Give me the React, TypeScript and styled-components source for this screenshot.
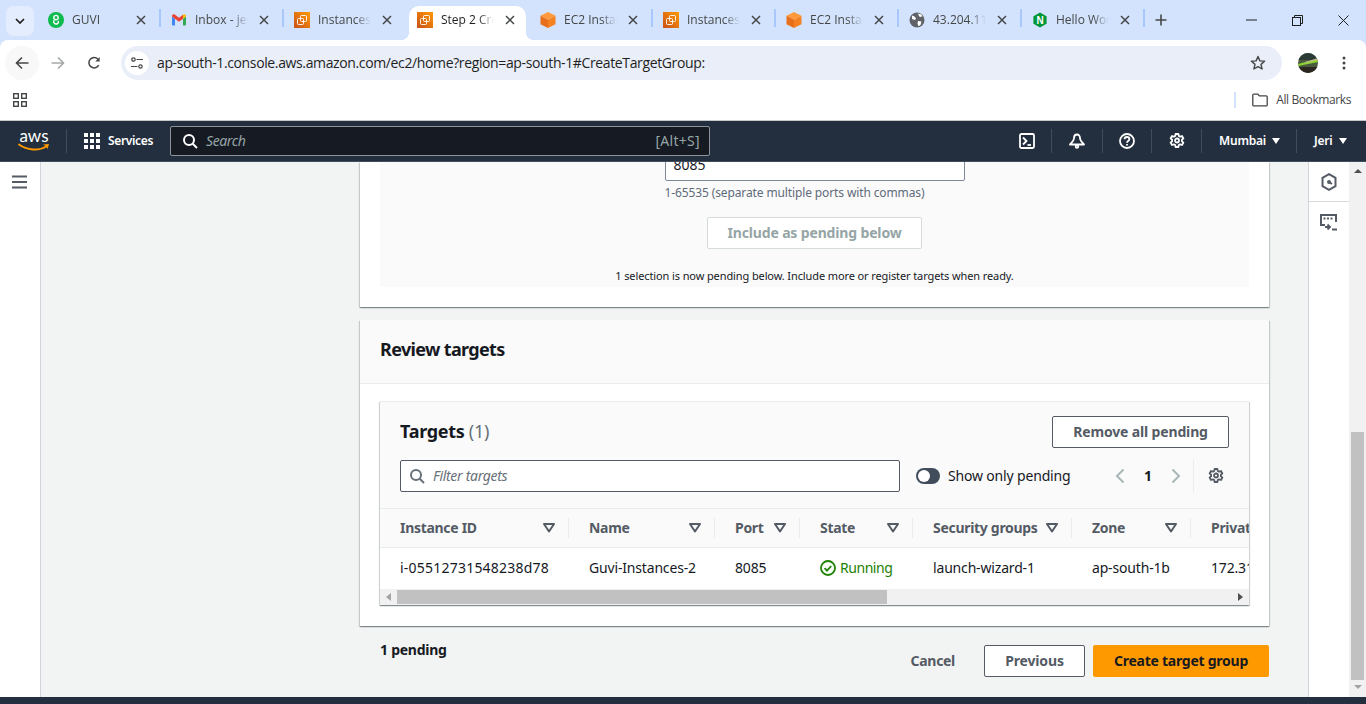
import React from "react";
import styled, { createGlobalStyle } from "styled-components";

const Global = createGlobalStyle`
  html, body { margin: 0; padding: 0; overflow: hidden; background: #fff; }
  * { box-sizing: border-box; }
`;
const chromeFont = `"Open Sans", "Noto Sans", sans-serif`;
const awsFont = `"Noto Sans", "Open Sans", sans-serif`;

const Page = styled.div`
  width: 1366px; height: 704px; display: flex; flex-direction: column; overflow: hidden;
  font-family: ${awsFont}; background: #d3e3fd;
`;
const TabStrip = styled.div`
  height: 40px; background: #d3e3fd; display: flex; align-items: flex-end; padding-left: 6px; flex: none;
`;
const TabList = styled.div`
  width: 28px; height: 30px; margin-bottom: 4px; margin-right: 3px; background: #e3edfd; border-radius: 8px;
  display: flex; align-items: center; justify-content: center; flex: none;
`;
const Tab = styled.div<{ $active?: boolean }>`
  width: 123px; height: 34px; flex: none; display: flex; align-items: center; padding: 0 11px; position: relative;
  padding-bottom: 6px;
  ${(p) => p.$active ? `
    background: #fff; width: 117px; margin: 0 3px; padding-left: 8px; padding-right: 8px; border-radius: 10px 10px 0 0; z-index: 1;
    &::before, &::after { content: ""; position: absolute; bottom: 0; width: 8px; height: 8px; background: radial-gradient(circle at 0 0, transparent 8px, #fff 8px); }
    &::before { left: -8px; }
    &::after { right: -8px; background: radial-gradient(circle at 100% 0, transparent 8px, #fff 8px); }
  ` : ""}
`;
const TabSep = styled.span`
  position: absolute; right: -1px; top: 3px; width: 2px; height: 18px; background: #a8c7fa;
`;
const TabIcon = styled.span`
  width: 16px; height: 16px; flex: none; display: block; margin-right: 8px;
  & > svg { display: block; }
`;
const TabTitle = styled.span<{ $active?: boolean }>`
  width: 53px; flex: none; overflow: hidden; white-space: nowrap; font: 12px/16px ${chromeFont}; color: ${(p) => p.$active ? "#1f1f1f" : "#444746"};
  -webkit-mask-image: linear-gradient(90deg, #000 70%, transparent 100%);
  mask-image: linear-gradient(90deg, #000 70%, transparent 100%);
`;
const TabClose = styled.span`
  margin-left: auto; width: 16px; height: 16px; display: flex; align-items: center; justify-content: center; flex: none;
`;
const NewTab = styled.div`
  width: 34px; height: 34px; display: flex; align-items: center; justify-content: center; flex: none; padding-bottom: 6px;
`;
const WinControls = styled.div`
  margin-left: auto; display: flex; height: 40px; align-items: center; flex: none;
`;
const WinBtn = styled.span`
  width: 46px; height: 40px; display: flex; align-items: center; justify-content: center;
`;
const Toolbar = styled.div`
  height: 40px; flex: none; display: flex; align-items: center; background: #fff; padding: 6px 0 0 5px; position: relative; border-radius: 8px 8px 0 0;
`;
const CircleBtn = styled.span<{ $hover?: boolean }>`
  width: 34px; height: 34px; border-radius: 50%; display: flex; align-items: center; justify-content: center; flex: none;
  margin-right: 2px; background: ${(p) => p.$hover ? "#f8f8f8" : "transparent"};
`;
const Omnibox = styled.div`
  margin-left: 8px; width: 1161px; height: 34px; border-radius: 17px; background: #e9eef8; display: flex; align-items: center; padding: 0 16px 0 4px; flex: none;
`;
const SiteChip = styled.span`
  width: 24px; height: 24px; border-radius: 50%; background: #fff; display: flex; align-items: center; justify-content: center; flex: none; margin-right: 8px;
`;
const Url = styled.span`
  font: 14px/20px ${chromeFont}; color: #1f1f1f; white-space: nowrap; flex: 1; letter-spacing: -0.37px;
`;
const Avatar = styled.span`
  width: 20px; height: 20px; margin-left: 16px; flex: none;
  & > svg { display: block; }
`;
const Kebab = styled.span`
  margin-left: 24px; display: flex; flex: none;
`;
const BookmarkBar = styled.div`
  height: 41px; flex: none; display: flex; align-items: center; background: #fff; padding: 0 15px 0 13px; border-bottom: 1px solid #c7c7c7;
`;
const BmSep = styled.span`
  margin-left: auto; width: 2px; height: 16px; background: #d3e3fd; flex: none;
`;
const BmFolder = styled.span`
  margin-left: 16px; margin-right: 8px; display: flex; flex: none;
`;
const BmLabel = styled.span`
  font: 12px/16px ${chromeFont}; color: #444746; white-space: nowrap; letter-spacing: -0.4px;
`;
const Nav = styled.div`
  height: 41px; flex: none; background: #232f3e; display: flex; align-items: center; padding-left: 18px; border-bottom: 1px solid #414d5c; color: #fff;
`;
const AwsLogo = styled.div`
  width: 32px; height: 26px; display: flex; flex-direction: column; align-items: center; flex: none;
`;
const AwsWord = styled.span`
  font: 400 17px/15px "Lato", sans-serif; color: #fff;
`;
const NavDivider = styled.span<{ $mx?: number }>`
  width: 1px; height: 24px; background: #414d5c; flex: none; margin: 0 ${(p) => p.$mx ?? 0}px;
`;
const Services = styled.span`
  display: flex; align-items: center; gap: 8px; font: 600 12px/16px ${awsFont}; color: #fff; flex: none; width: 87px; padding-left: 1px; letter-spacing: -0.35px;
`;
const SearchBox = styled.div`
  width: 540px; height: 30px; background: #161a22; border: 1px solid #8d9499; border-radius: 2px; display: flex; align-items: center; padding: 0 9px 0 11px; flex: none;
`;
const SearchHint = styled.span`
  margin-left: 8px; font: italic 14px/18px ${awsFont}; color: #95a5a6; letter-spacing: -0.4px;
`;
const SearchKey = styled.span`
  font: 14px/18px ${awsFont}; color: #95a5a6; margin-left: auto; letter-spacing: 0.3px;
`;
const NavRight = styled.div`
  margin-left: auto; display: flex; align-items: center; flex: none;
`;
const NavIcon = styled.span<{ $w: number }>`
  width: ${(p) => p.$w}px; display: flex; align-items: center; justify-content: center; flex: none;
`;
const NavMenu = styled.span<{ $w: number }>`
  width: ${(p) => p.$w}px; display: flex; align-items: center; gap: 6px; padding-left: 17px; font: 600 12px/16px ${awsFont}; color: #fff; flex: none; letter-spacing: -0.2px;
`;
const Caret = styled.span`
  width: 0; height: 0; border-left: 4px solid transparent; border-right: 4px solid transparent; border-top: 6px solid #fff;
`;
const Body = styled.div`
  flex: 1; display: flex; min-height: 0;
`;
const SideNav = styled.div`
  width: 41px; background: #fff; border-right: 1px solid #d1d5db; flex: none; padding: 13px 0 0 12px;
  & > svg { display: block; }
`;
const Main = styled.div`
  flex: 1; background: #f2f3f3; padding-left: 319px; overflow: hidden; min-width: 0;
`;
const Column = styled.div`
  width: 909px; display: flex; flex-direction: column;
`;
const Card = styled.div`
  background: #fff; box-shadow: 0 1px 1px 0 rgba(0,28,36,.3), 1px 1px 1px 0 rgba(0,28,36,.15), -1px 1px 1px 0 rgba(0,28,36,.15);
`;
const TopCard = styled(Card)`
  height: 145px; padding: 0 20px;
`;
const Panel = styled.div`
  height: 125px; background: #fafafa; overflow: hidden; display: flex; flex-direction: column; align-items: center;
`;
const PortField = styled.div`
  width: 300px; height: 32px; margin-top: -13px; border: 1px solid #7d8998; border-radius: 2px; background: #fff; padding: 0 8px; flex: none;
  font: 14px/30px ${awsFont}; color: #16191f;
`;
const Hint = styled.div`
  width: 300px; margin-top: 4px; font: 12px/16px ${awsFont}; color: #5f6b7a; white-space: nowrap; flex: none; letter-spacing: -0.12px;
`;
const OutlineBtn = styled.span<{ $w: number; $disabled?: boolean }>`
  width: ${(p) => p.$w}px; height: 32px; display: flex; align-items: center; justify-content: center; flex: none; background: #fff; border-radius: 2px;
  border: 1px solid ${(p) => p.$disabled ? "#d5dbdb" : "#545b64"}; color: ${(p) => p.$disabled ? "#95a5a6" : "#545b64"};
  font: 700 14px/18px ${awsFont}; letter-spacing: -0.15px; white-space: nowrap;
`;
const PendingBtn = styled(OutlineBtn)`
  margin-top: 16px;
`;
const Notice = styled.div`
  margin-top: 19px; font: 11px/16px ${awsFont}; color: #16191f; white-space: nowrap; letter-spacing: -0.11px;
`;
const ReviewCard = styled(Card)`
  margin-top: 13px; height: 306px;
`;
const CardHead = styled.div`
  height: 64px; padding: 0 20px 5px; background: #fafafa; border-bottom: 1px solid #eaeded; display: flex; align-items: center;
  font: 700 18px/22px ${awsFont}; color: #16191f; letter-spacing: -0.65px;
`;
const CardBody = styled.div`
  padding: 17px 20px 21px;
`;
const TargetBox = styled.div`
  height: 204px; box-shadow: 0 1px 1px 0 rgba(0,28,36,.3), 1px 1px 1px 0 rgba(0,28,36,.15), -1px 1px 1px 0 rgba(0,28,36,.15); border-top: 1px solid #eaeded;
  display: flex; flex-direction: column; overflow: hidden; background: #fff;
`;
const BoxHead = styled.div`
  height: 106px; background: #fafafa; padding: 14px 20px 0; flex: none;
`;
const TitleRow = styled.div`
  height: 32px; display: flex; align-items: center; justify-content: space-between;
`;
const BoxTitle = styled.div`
  font: 700 18px/22px ${awsFont}; color: #16191f; letter-spacing: -0.3px; margin-bottom: 2px;
`;
const Count = styled.span`
  font-weight: 400; color: #687078;
`;
const FilterRow = styled.div`
  margin-top: 12px; height: 32px; display: flex; align-items: center;
`;
const FilterInput = styled.div`
  width: 500px; height: 32px; border: 1px solid #545b64; border-radius: 2px; background: #fff; display: flex; align-items: center; padding-left: 8px; flex: none;
`;
const FilterHint = styled.span`
  margin-left: 8px; font: italic 14px/18px ${awsFont}; color: #687078; letter-spacing: -0.3px;
`;
const Toggle = styled.span`
  margin-left: 16px; width: 24px; height: 16px; border-radius: 8px; background: #414d5c; padding: 2px; flex: none; display: flex;
`;
const Knob = styled.span`
  width: 12px; height: 12px; border-radius: 50%; background: #fff;
`;
const ToggleLabel = styled.span`
  margin-left: 8px; font: 14px/18px ${awsFont}; color: #16191f; width: 167px; white-space: nowrap; flex: none; letter-spacing: -0.17px;
`;
const Pager = styled.div`
  display: flex; align-items: center; flex: none; height: 32px;
`;
const PageNum = styled.span`
  width: 46px; text-align: center; font: 700 14px/18px ${awsFont}; color: #16191f;
`;
const PagerDivider = styled.span`
  width: 1px; height: 32px; background: #eaeded; margin: 0 14px 0 12px; flex: none;
`;
const GridRow = styled.div<{ $head?: boolean }>`
  display: grid; grid-template-columns: 189px 146px 85px 113px 159px 119px 120px; width: 931px; flex: none;
  height: ${(p) => p.$head ? 40 : 41}px; align-items: center; background: ${(p) => p.$head ? "#fafafa" : "#fff"};
  ${(p) => p.$head ? "border-top: 1px solid #eaeded; border-bottom: 1px solid #eaeded;" : ""}
`;
const Table = styled.div`
  overflow: hidden; flex: none;
`;
const HeadCell = styled.div<{ $last?: boolean }>`
  height: 20px; display: flex; align-items: center; justify-content: space-between; padding: 0 ${(p) => p.$last ? 0 : 13}px 0 20px;
  ${(p) => p.$last ? "" : "border-right: 1px solid #eaeded;"}
  font: 700 14px/18px ${awsFont}; color: #545b64; white-space: nowrap; letter-spacing: -0.3px;
`;
const Cell = styled.div<{ $mono?: boolean }>`
  padding: 0 0 2px 20px; font: 14px/18px ${awsFont}; color: #16191f; white-space: nowrap; display: flex; align-items: center;
  letter-spacing: ${(p) => p.$mono ? "0.22px" : "-0.17px"};
`;
const Running = styled.span`
  color: #1d8102; margin-left: 4px; letter-spacing: -0.45px;
`;
const ScrollTrack = styled.div`
  height: 16px; background: #f1f1f1; display: flex; align-items: center; flex: none; width: 100%;
`;
const ScrollThumb = styled.span`
  width: 490px; height: 14px; background: #c1c1c1; flex: none;
`;
const ArrowBox = styled.span<{ $end?: boolean }>`
  width: 17px; height: 14px; display: flex; align-items: center; justify-content: center; flex: none;
  ${(p) => p.$end ? "margin-left: auto;" : ""}
`;
const ActionBar = styled.div`
  margin-top: 19px; height: 32px; display: flex; align-items: center; padding-left: 20px;
`;
const PendingNote = styled.span`
  font: 700 14px/18px ${awsFont}; color: #16191f; align-self: flex-start; margin-top: -4px; letter-spacing: -0.25px;
`;
const CancelLink = styled.span`
  margin-left: auto; font: 700 14px/18px ${awsFont}; color: #545b64; letter-spacing: -0.3px;
`;
const PrevBtn = styled(OutlineBtn)`
  margin-left: 29px;
`;
const PrimaryBtn = styled.span`
  margin-left: 8px; width: 176px; height: 32px; background: #ff9900; border-radius: 2px; display: flex; align-items: center; justify-content: center;
  font: 700 14px/18px ${awsFont}; color: #16191f; letter-spacing: -0.25px;
`;
const Rail = styled.div`
  width: 41px; flex: none; background: #fff; border-left: 1px solid #d1d5db; display: flex; flex-direction: column;
`;
const RailItem = styled.div<{ $line?: boolean }>`
  height: 40px; display: flex; align-items: center; justify-content: center;
  ${(p) => p.$line ? "border-bottom: 1px solid #d5dbdb;" : ""}
`;
const PageScroll = styled.div`
  width: 17px; flex: none; background: #f1f1f1; display: flex; flex-direction: column; align-items: center; padding-bottom: 3px;
`;
const ScrollArrow = styled.span<{ $down?: boolean }>`
  width: 0; height: 0; border-left: 4px solid transparent; border-right: 4px solid transparent; flex: none;
  ${(p) => p.$down ? "border-top: 4px solid #a3a3a3; margin-top: auto; margin-bottom: 5px;" : "border-bottom: 4px solid #505050; margin-top: 7px;"}
`;
const PageThumb = styled.span`
  width: 13px; height: 248px; background: #c1c1c1; margin-top: 259px; flex: none;
`;
const Footer = styled.div`
  height: 7px; background: #232f3e; flex: none;
`;

/* ---------- icons ---------- */
const Chevron = () => (
  <svg width="10" height="6" viewBox="0 0 10 6"><path d="M1 1l4 4 4-4" fill="none" stroke="#1f1f1f" strokeWidth="1.7" /></svg>
);
const X = () => (
  <svg width="10" height="10" viewBox="0 0 10 10"><path d="M1 1l8 8M9 1l-8 8" stroke="#444746" strokeWidth="1.5" /></svg>
);
const Ec2 = () => (
  <svg width="16" height="16" viewBox="0 0 16 16">
    <defs><linearGradient id="ec" x1="0" y1="1" x2="1" y2="0"><stop offset="0" stopColor="#c8511b" /><stop offset="1" stopColor="#f90" /></linearGradient></defs>
    <rect width="16" height="16" fill="url(#ec)" />
    <rect x="6.5" y="3.5" width="6" height="6" rx="1" fill="none" stroke="#fff" strokeWidth=".9" />
    <rect x="3.5" y="6.5" width="6" height="6" rx="1" fill="none" stroke="#fff" strokeWidth=".9" />
  </svg>
);
const Cube = () => (
  <svg width="16" height="16" viewBox="0 0 16 16">
    <path d="M8 0l7.5 3.8L8 7.8.5 3.8z" fill="#ff9a3c" />
    <path d="M.5 3.8L8 7.8V16L.5 12.2z" fill="#e8701a" />
    <path d="M15.5 3.8L8 7.8V16l7.5-3.8z" fill="#f58220" />
  </svg>
);
const Guvi = () => (
  <svg width="16" height="16" viewBox="0 0 16 16">
    <circle cx="8" cy="8" r="8" fill="#0dbb4f" />
    <circle cx="8" cy="5.6" r="2.2" fill="none" stroke="#fff" strokeWidth="1.4" />
    <path d="M6.2 8.2C5.2 9.4 5.6 12 8 12s2.8-2 2-3.2" fill="none" stroke="#fff" strokeWidth="1.4" />
  </svg>
);
const Gmail = () => (
  <svg width="16" height="16" viewBox="0 0 16 16">
    <path d="M1 13.5V4.6L4 6.8v6.7H2a1 1 0 0 1-1-1z" fill="#4285f4" />
    <path d="M15 13.5V4.6L12 6.8v6.7h2a1 1 0 0 0 1-1z" fill="#34a853" />
    <path d="M1 3.8C1 2.4 2.6 1.7 3.7 2.6L8 5.8l4-3v4L8 9.8 4 6.8 1 4.6z" fill="#ea4335" />
    <path d="M12 2.8l.4-.3C13.5 1.7 15 2.4 15 3.8v.8l-3 2.2z" fill="#fbbc04" />
  </svg>
);
const Globe = () => (
  <svg width="16" height="16" viewBox="0 0 16 16">
    <circle cx="8" cy="8" r="7.5" fill="#5f6368" />
    <path d="M3 3.5l2.5 1 1.5 2-1 1.5-3-1zM9 1.5l3 .8 1.5 2-2.5.7-1-1zM9 9l3.5.5-1 3.5-2 1.3-1-2.5z" fill="#fff" />
  </svg>
);
const Nginx = () => (
  <svg width="16" height="16" viewBox="0 0 16 16">
    <path d="M8 .5l6.6 3.75v7.5L8 15.5l-6.6-3.75v-7.5z" fill="#009639" />
    <text x="8" y="11.6" textAnchor="middle" fontFamily="Liberation Sans, sans-serif" fontWeight="700" fontSize="10" fill="#fff">N</text>
  </svg>
);
const Plus = () => (
  <svg width="12" height="12" viewBox="0 0 12 12"><path d="M6 .5v11M.5 6h11" stroke="#444746" strokeWidth="1.6" /></svg>
);
const Back = ({ color }: { color: string }) => (
  <svg width="14" height="14" viewBox="0 0 14 14"><path d="M13.5 7H1.8M7 1.5L1.5 7 7 12.5" fill="none" stroke={color} strokeWidth="1.6" /></svg>
);
const Forward = () => (
  <svg width="14" height="14" viewBox="0 0 14 14"><path d="M.5 7h11.7M7 1.5L12.5 7 7 12.5" fill="none" stroke="#a6a8aa" strokeWidth="1.6" /></svg>
);
const Reload = () => (
  <svg width="14" height="14" viewBox="0 0 14 14">
    <path d="M11.7 9.2A5.2 5.2 0 1 1 11 3.2" fill="none" stroke="#444746" strokeWidth="1.5" />
    <path d="M12.7 1v4.4H8.3z" fill="#444746" />
  </svg>
);
const Tune = () => (
  <svg width="14" height="14" viewBox="0 0 14 14" fill="none" stroke="#444746" strokeWidth="1.2">
    <circle cx="3.5" cy="3.5" r="1.7" /><path d="M6.5 3.5H13M1 10.5h6.5" /><circle cx="10.5" cy="10.5" r="1.7" />
  </svg>
);
const Star = () => (
  <svg width="16" height="16" viewBox="0 0 16 16"><path d="M8 1.5l1.9 4.4 4.7.4-3.6 3.1 1.1 4.6L8 11.6 3.9 14l1.1-4.6L1.4 6.3l4.7-.4z" fill="none" stroke="#444746" strokeWidth="1.4" strokeLinejoin="round" /></svg>
);
const AvatarImg = () => (
  <svg width="20" height="20" viewBox="0 0 20 20">
    <defs><clipPath id="av"><circle cx="10" cy="10" r="10" /></clipPath></defs>
    <g clipPath="url(#av)">
      <rect width="20" height="20" fill="#4a5a3c" />
      <rect y="0" width="20" height="7" fill="#2a3a34" />
      <path d="M0 11L20 6v3L0 13z" fill="#8fd435" />
      <path d="M7 9l13-4v1.4L7 10z" fill="#c8b890" />
      <rect y="14" width="20" height="6" fill="#2b2620" />
    </g>
  </svg>
);
const Dots = () => (
  <svg width="4" height="14" viewBox="0 0 4 14" fill="#444746"><circle cx="2" cy="2" r="1.5" /><circle cx="2" cy="7" r="1.5" /><circle cx="2" cy="12" r="1.5" /></svg>
);
const Apps = () => (
  <svg width="14" height="14" viewBox="0 0 14 14" fill="none" stroke="#444746" strokeWidth="1.4">
    <rect x=".7" y=".7" width="4.6" height="4.6" /><rect x="8.7" y=".7" width="4.6" height="4.6" />
    <rect x=".7" y="8.7" width="4.6" height="4.6" /><rect x="8.7" y="8.7" width="4.6" height="4.6" />
  </svg>
);
const Folder = () => (
  <svg width="16" height="14" viewBox="0 0 16 14"><path d="M.8 2.2c0-.6.4-1 1-1h4l1.6 1.7h6.8c.6 0 1 .4 1 1v8c0 .6-.4 1-1 1H1.8c-.6 0-1-.4-1-1z" fill="none" stroke="#444746" strokeWidth="1.3" /></svg>
);
const Smile = () => (
  <svg width="32" height="9" viewBox="0 0 32 9">
    <path d="M1 1.5C9 7.5 21 8 28 3.5" fill="none" stroke="#ff9900" strokeWidth="1.9" strokeLinecap="round" />
    <path d="M25 1.6L31 1l-1.6 5.2c-.3-1.6-1.6-3.4-4.4-4.6z" fill="#ff9900" />
  </svg>
);
const GridIcon = () => (
  <svg width="16" height="16" viewBox="0 0 16 16" fill="#fff">
    {[0, 6, 12].flatMap((y) => [0, 6, 12].map((x) => <rect key={`${x}-${y}`} x={x} y={y} width="4" height="4" />))}
  </svg>
);
const Search = ({ color, size = 16 }: { color: string; size?: number }) => (
  <svg width={size} height={size} viewBox="0 0 16 16" fill="none" stroke={color} strokeWidth="2">
    <circle cx="7" cy="7" r="5" /><path d="M10.5 10.5L15 15" />
  </svg>
);
const Terminal = () => (
  <svg width="16" height="16" viewBox="0 0 16 16" fill="none" stroke="#fff" strokeWidth="1.8">
    <rect x="1" y="1" width="14" height="14" rx="1.5" /><path d="M4 4.5L7.5 8 4 11.5" /><path d="M8.5 12h3.5" />
  </svg>
);
const Bell = () => (
  <svg width="16" height="16" viewBox="0 0 16 16" fill="none" stroke="#fff" strokeWidth="1.8" strokeLinejoin="round">
    <path d="M8 1.5C6.2 1.5 5 3 5 5c0 2.4-1.5 4-4 6.5h14C12.5 9 11 7.4 11 5c0-2-1.2-3.5-3-3.5z" /><circle cx="8" cy="13.5" r="1.3" />
  </svg>
);
const Help = () => (
  <svg width="16" height="16" viewBox="0 0 16 16" fill="none" stroke="#fff" strokeWidth="1.8">
    <circle cx="8" cy="8" r="7" /><path d="M5.6 6.2C5.6 4.8 6.7 4 8 4s2.4.8 2.4 2.1c0 2-2.4 1.9-2.4 3.6" /><path d="M8 11v1.5" />
  </svg>
);
const Gear = ({ color }: { color: string }) => (
  <svg width="16" height="16" viewBox="0 0 16 16" fill="none" stroke={color} strokeWidth="1.8" strokeLinejoin="round">
    <path d="M6.6 1h2.8l.4 2 1.3.7 1.9-.7 1.4 2.4-1.5 1.3v1.6l1.5 1.3-1.4 2.4-1.9-.7-1.3.7-.4 2H6.6l-.4-2-1.3-.7-1.9.7L1.6 9.6l1.5-1.3V6.7L1.6 5.4 3 3l1.9.7 1.3-.7z" />
    <circle cx="8" cy="7.5" r="2" />
  </svg>
);
const Menu = () => (
  <svg width="16" height="14" viewBox="0 0 16 14"><path d="M0 1.5h15M0 7h15M0 12.5h15" stroke="#545b64" strokeWidth="2" /></svg>
);
const HexGauge = () => (
  <svg width="16" height="18" viewBox="0 0 16 18" fill="none" stroke="#545b64" strokeWidth="2">
    <path d="M8 1.2l6.5 3.7v8.2L8 16.8l-6.5-3.7V4.9z" /><path d="M8 9l3 2" /><circle cx="8" cy="9" r="1" fill="#545b64" />
  </svg>
);
const Screen = () => (
  <svg width="18" height="17" viewBox="0 0 18 17" fill="none" stroke="#545b64" strokeWidth="2">
    <path d="M5 11H1V1h15v7" />
    <path d="M3.5 4.5h2M7 4.5h2M10.5 4.5h2" strokeWidth="2" />
    <path d="M5 13h5M7.5 10.5L10 13l-2.5 2.5M12 15.5h5" strokeWidth="1.8" />
  </svg>
);
const Filter = () => (
  <svg width="12" height="10" viewBox="0 0 12 10"><path d="M1 1h10L6 8.5z" fill="none" stroke="#545b64" strokeWidth="2" strokeLinejoin="round" /></svg>
);
const CheckCircle = () => (
  <svg width="16" height="16" viewBox="0 0 16 16" fill="none" stroke="#1d8102" strokeWidth="1.8">
    <circle cx="8" cy="8" r="7" /><path d="M4.6 8.2l2.4 2.4 4.2-4.6" />
  </svg>
);
const PagerChevron = ({ dir }: { dir: "l" | "r" }) => (
  <svg width="10" height="16" viewBox="0 0 10 16"><path d={dir === "l" ? "M8.5 1.5L2 8l6.5 6.5" : "M1.5 1.5L8 8l-6.5 6.5"} fill="none" stroke="#aab7b8" strokeWidth="2" /></svg>
);
const TinyArrow = ({ dir, color }: { dir: "l" | "r"; color: string }) => (
  <svg width="5" height="8" viewBox="0 0 5 8"><path d={dir === "l" ? "M5 0v8L0 4z" : "M0 0v8l5-4z"} fill={color} /></svg>
);

const tabs = [
  { icon: <Guvi />, title: "GUVI" },
  { icon: <Gmail />, title: "Inbox - jeri" },
  { icon: <Ec2 />, title: "Instances | EC2" },
  { icon: <Ec2 />, title: "Step 2 Create", active: true },
  { icon: <Cube />, title: "EC2 Instance" },
  { icon: <Ec2 />, title: "Instances | EC2" },
  { icon: <Cube />, title: "EC2 Instance" },
  { icon: <Globe />, title: "43.204.110.1" },
  { icon: <Nginx />, title: "Hello World" },
];
const showSep = [true, true, false, false, true, true, true, true, true];

const columns = ["Instance ID", "Name", "Port", "State", "Security groups", "Zone"];

export default function App() {
  return (
    <Page>
      <Global />
      <TabStrip>
        <TabList><Chevron /></TabList>
        {tabs.map((t, i) => (
          <Tab key={i} $active={t.active}>
            <TabIcon>{t.icon}</TabIcon>
            <TabTitle $active={t.active}>{t.title}</TabTitle>
            <TabClose><X /></TabClose>
            {showSep[i] && <TabSep />}
          </Tab>
        ))}
        <NewTab><Plus /></NewTab>
        <WinControls>
          <WinBtn><svg width="11" height="2" viewBox="0 0 11 2"><path d="M0 1h11" stroke="#1f1f1f" /></svg></WinBtn>
          <WinBtn><svg width="11" height="11" viewBox="0 0 11 11" fill="none" stroke="#1f1f1f"><rect x=".5" y="2.5" width="8" height="8" /><path d="M2.5 2.5v-2h8v8h-2" /></svg></WinBtn>
          <WinBtn><svg width="11" height="11" viewBox="0 0 11 11"><path d="M.5.5l10 10M10.5.5l-10 10" stroke="#1f1f1f" /></svg></WinBtn>
        </WinControls>
      </TabStrip>
      <Toolbar>
        <CircleBtn $hover><Back color="#444746" /></CircleBtn>
        <CircleBtn><Forward /></CircleBtn>
        <CircleBtn><Reload /></CircleBtn>
        <Omnibox>
          <SiteChip><Tune /></SiteChip>
          <Url>ap-south-1.console.aws.amazon.com/ec2/home?region=ap-south-1#CreateTargetGroup:</Url>
          <Star />
        </Omnibox>
        <Avatar><AvatarImg /></Avatar>
        <Kebab><Dots /></Kebab>
      </Toolbar>
      <BookmarkBar>
        <Apps />
        <BmSep />
        <BmFolder><Folder /></BmFolder>
        <BmLabel>All Bookmarks</BmLabel>
      </BookmarkBar>
      <Nav>
        <AwsLogo><AwsWord>aws</AwsWord><Smile /></AwsLogo>
        <NavDivider $mx={16} />
        <Services><GridIcon />Services</Services>
        <SearchBox>
          <Search color="#fff" />
          <SearchHint>Search</SearchHint>
          <SearchKey>[Alt+S]</SearchKey>
        </SearchBox>
        <NavRight>
          <NavIcon $w={48}><Terminal /></NavIcon>
          <NavDivider />
          <NavIcon $w={50}><Bell /></NavIcon>
          <NavDivider />
          <NavIcon $w={48}><Help /></NavIcon>
          <NavDivider />
          <NavIcon $w={49}><Gear color="#fff" /></NavIcon>
          <NavDivider />
          <NavMenu $w={94}>Mumbai<Caret /></NavMenu>
          <NavDivider />
          <NavMenu $w={69}>Jeri<Caret /></NavMenu>
        </NavRight>
      </Nav>
      <Body>
        <SideNav><Menu /></SideNav>
        <Main>
          <Column>
            <TopCard>
              <Panel>
                <PortField>8085</PortField>
                <Hint>1-65535 (separate multiple ports with commas)</Hint>
                <PendingBtn $w={215} $disabled>Include as pending below</PendingBtn>
                <Notice>1 selection is now pending below. Include more or register targets when ready.</Notice>
              </Panel>
            </TopCard>
            <ReviewCard>
              <CardHead>Review targets</CardHead>
              <CardBody>
                <TargetBox>
                  <BoxHead>
                    <TitleRow>
                      <BoxTitle>Targets <Count>(1)</Count></BoxTitle>
                      <OutlineBtn $w={177}>Remove all pending</OutlineBtn>
                    </TitleRow>
                    <FilterRow>
                      <FilterInput><Search color="#687078" /><FilterHint>Filter targets</FilterHint></FilterInput>
                      <Toggle><Knob /></Toggle>
                      <ToggleLabel>Show only pending</ToggleLabel>
                      <Pager>
                        <PagerChevron dir="l" />
                        <PageNum>1</PageNum>
                        <PagerChevron dir="r" />
                        <PagerDivider />
                        <Gear color="#545b64" />
                      </Pager>
                    </FilterRow>
                  </BoxHead>
                  <Table>
                    <GridRow $head>
                      {columns.map((c) => <HeadCell key={c}>{c}<Filter /></HeadCell>)}
                      <HeadCell $last>Private IP</HeadCell>
                    </GridRow>
                    <GridRow>
                      <Cell $mono>i-05512731548238d78</Cell>
                      <Cell>Guvi-Instances-2</Cell>
                      <Cell>8085</Cell>
                      <Cell><CheckCircle /><Running>Running</Running></Cell>
                      <Cell>launch-wizard-1</Cell>
                      <Cell>ap-south-1b</Cell>
                      <Cell>172.31.8.14</Cell>
                    </GridRow>
                  </Table>
                  <ScrollTrack>
                    <ArrowBox><TinyArrow dir="l" color="#a3a3a3" /></ArrowBox>
                    <ScrollThumb />
                    <ArrowBox $end><TinyArrow dir="r" color="#505050" /></ArrowBox>
                  </ScrollTrack>
                </TargetBox>
              </CardBody>
            </ReviewCard>
            <ActionBar>
              <PendingNote>1 pending</PendingNote>
              <CancelLink>Cancel</CancelLink>
              <PrevBtn $w={101}>Previous</PrevBtn>
              <PrimaryBtn>Create target group</PrimaryBtn>
            </ActionBar>
          </Column>
        </Main>
        <Rail>
          <RailItem $line><HexGauge /></RailItem>
          <RailItem><Screen /></RailItem>
        </Rail>
        <PageScroll>
          <ScrollArrow />
          <PageThumb />
          <ScrollArrow $down />
        </PageScroll>
      </Body>
      <Footer />
    </Page>
  );
}
